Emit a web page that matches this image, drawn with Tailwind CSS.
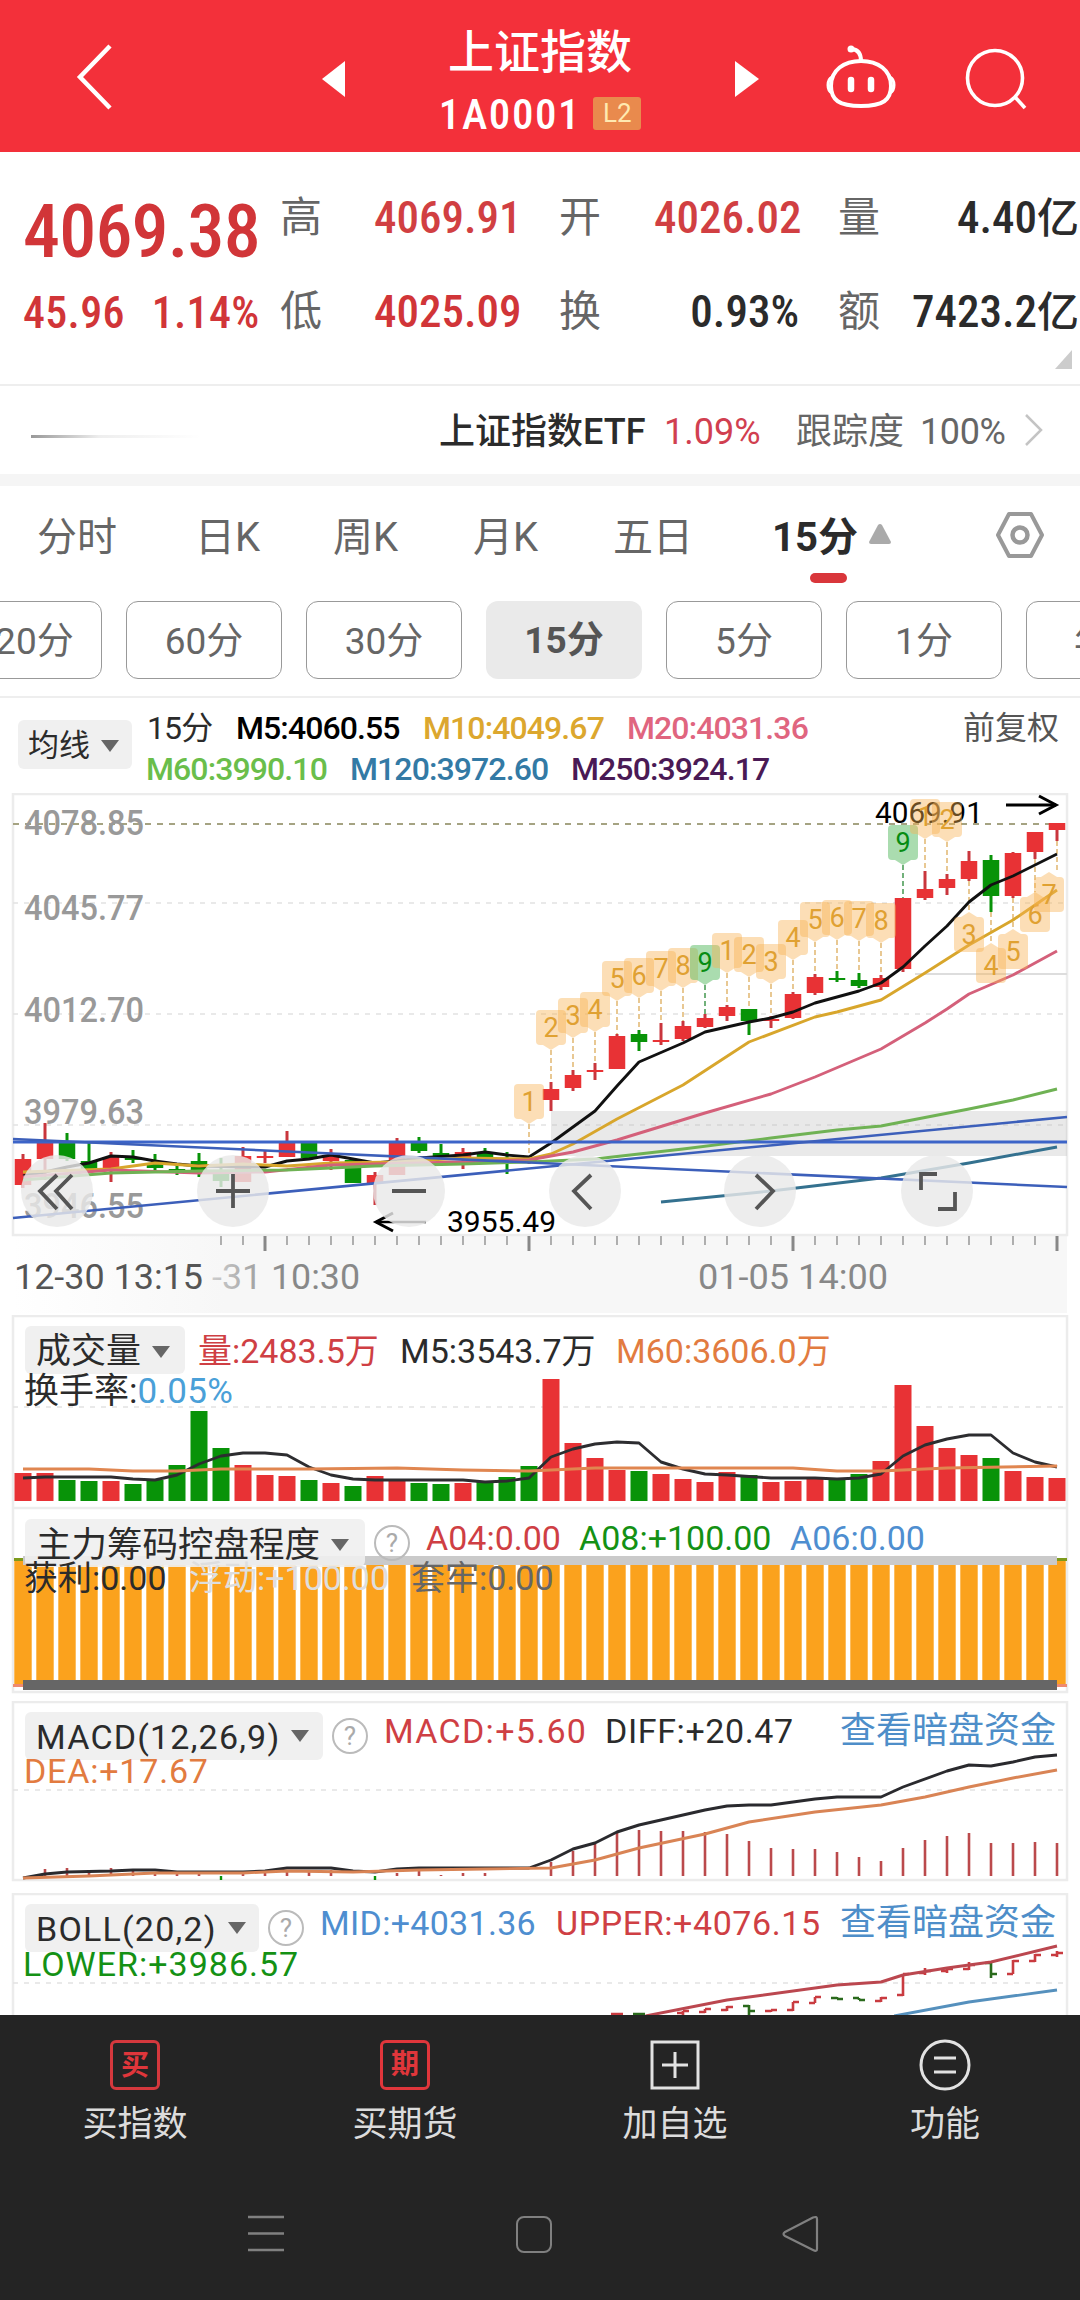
<!DOCTYPE html>
<html lang="zh-CN">
<head>
  <meta charset="UTF-8" />
  <meta name="viewport" content="width=device-width, initial-scale=1.0"/>
  <title>上证指数 1A0001</title>
  <script src="https://cdn.jsdelivr.net/npm/@tailwindcss/browser@4"></script>
</head>
<body class="w-[1080px] h-[2300px] overflow-hidden bg-white font-['Roboto','Noto_Sans_CJK_SC',sans-serif] text-[#2b2b2b]">
<div class="flex h-[2300px] flex-col overflow-hidden">

  <!-- Header -->
  <header class="flex h-[152px] shrink-0 items-center bg-[#f3303a] text-white">
    <svg class="ml-[70px] h-[70px] w-[50px]" viewBox="0 0 50 70" fill="none" stroke="#fff" stroke-width="4.5"><path d="M40 5 L10 36 L40 67"/></svg>
    <svg class="ml-[202px] mt-[6px] h-[36px] w-[23px]" viewBox="0 0 23 36" fill="#fff"><path d="M23 0 L0 18 L23 36Z"/></svg>
    <div class="flex w-[390px] flex-col items-center">
      <h1 class="mt-[9px] text-[46px] leading-[56px] font-medium">上证指数</h1>
      <div class="mt-[10px] flex items-center gap-[12px]">
        <span class="text-[43px] leading-[48px] font-medium font-stretch-75% tracking-[1.6px]">1A0001</span>
        <span class="flex h-[33px] w-[48px] items-center justify-center rounded-[3px] bg-[#e98a4d] text-[26px] text-[#ffe9b0]">L2</span>
      </div>
    </div>
    <svg class="mt-[6px] h-[36px] w-[24px]" viewBox="0 0 24 36" fill="#fff"><path d="M0 0 L24 18 L0 36Z"/></svg>
    <svg class="ml-[64px] h-[70px] w-[76px]" viewBox="0 0 76 70" fill="none" stroke="#fff" stroke-width="4">
      <path d="M38 20 C55 20 68 29 68 45 C68 59 60 65 38 65 C16 65 8 59 8 45 C8 29 21 20 38 20Z"/>
      <path d="M9 36 Q5 38 5 44 Q5 50 9 52 M67 36 Q71 38 71 44 Q71 50 67 52" stroke-width="3"/>
      <path d="M38 20 Q38 9 29 8"/><circle cx="28" cy="8" r="3.500" fill="#fff" stroke="none"/>
      <path d="M28 39V48M48 39V48" stroke-width="6.5" stroke-linecap="round"/>
    </svg>
    <svg class="ml-[62px] mt-[3px] h-[66px] w-[66px]" viewBox="0 0 66 66" fill="none" stroke="#fff" stroke-width="3.6"><circle cx="34" cy="33" r="27.5"/><path d="M54 52 L64 63"/></svg>
  </header>

  <!-- Quote -->
  <section class="relative h-[232px] shrink-0 pt-[38px]">
    <div class="flex pl-[23px]">
      <div class="w-[257px] text-[#d13538]">
        <div class="h-[84px] pt-[4px] text-[74px] leading-[76px] font-medium font-stretch-75% tracking-[-.8px]">4069.38</div>
        <div class="flex gap-[27px] pt-[12px] text-[44px] leading-[54px] font-medium font-stretch-75% tracking-[.3px]"><span>45.96</span><span>1.14%</span></div>
      </div>
      <div class="grid w-[800px] grid-cols-[94px_185px_95px_145px_39px_41px_200px] text-[45px] leading-[56px] font-medium font-stretch-75%">
        <span class="h-[94px] text-[42px] font-normal text-[#666]">高</span><span class="text-[#d13f42]">4069.91</span><span class="text-[42px] font-normal text-[#666]">开</span><span class="text-right text-[#d13f42]">4026.02</span><span></span><span class="text-[42px] font-normal text-[#666]">量</span><span class="text-right">4.40<span class="text-[42px]">亿</span></span>
        <span class="text-[42px] font-normal text-[#666]">低</span><span class="text-[#d13538]">4025.09</span><span class="text-[42px] font-normal text-[#666]">换</span><span class="text-right">0.93%</span><span></span><span class="text-[42px] font-normal text-[#666]">额</span><span class="text-right">7423.2<span class="text-[42px]">亿</span></span>
      </div>
    </div>
    <svg class="absolute left-[1055px] top-[198px] h-[19px] w-[17px]" viewBox="0 0 17 19" fill="#ccc"><path d="M17 0V19H0Z"/></svg>
  </section>

  <!-- ETF -->
  <section class="flex h-[102px] shrink-0 items-center border-t-2 border-[#eeeeee] border-b-[12px] border-b-[#f5f5f5] pl-[31px] pt-[3px] text-[36px]">
    <div class="mt-[10px] h-[3px] w-[170px] bg-linear-to-r from-[#999] via-[#eee] via-40% to-white"></div>
    <span class="ml-[238px] w-[225px] font-medium">上证指数ETF</span>
    <span class="w-[132px] text-[#d13f50]">1.09%</span>
    <span class="w-[124px] text-[#666]">跟踪度</span>
    <span class="w-[104px] text-[#666] tracking-[-.4px]">100%</span>
    <svg class="-mt-[3px] h-[34px] w-[20px]" viewBox="0 0 20 34" fill="none" stroke="#c4c4c4" stroke-width="2.5"><path d="M2 2 L17 17 L2 32"/></svg>
  </section>

  <!-- Period tabs -->
  <nav class="relative flex h-[115px] shrink-0 text-[40px] leading-[104px] text-[#666]">
    <span class="ml-[37px] w-[158px]">分时</span>
    <span class="w-[138px]">日K</span>
    <span class="w-[140px]">周K</span>
    <span class="w-[140px]">月K</span>
    <span class="w-[159px]">五日</span>
    <span class="w-[97px] font-bold text-[#2b2b2b]">15分</span>
    <svg class="mt-[38px] h-[20px] w-[22px]" viewBox="0 0 22 20" fill="#aaa"><path d="M9 1 Q11 -1 13 1 L22 18 Q22 20 20 20 H2 Q0 20 0 18Z"/></svg>
    <svg class="ml-[104px] mt-[25px] h-[48px] w-[50px]" viewBox="0 0 50 48" fill="none" stroke="#999" stroke-width="4"><path d="M14 3 H36 L47 24 L36 45 H14 L3 24Z" stroke-linejoin="round"/><circle cx="25" cy="24" r="7.5" stroke-width="4.5"/></svg>
    <div class="absolute left-[810px] top-[87px] h-[10px] w-[37px] rounded-full bg-[#d9363b]"></div>
  </nav>
  <div class="-ml-[54px] flex h-[97px] w-[1260px] shrink-0 gap-6 border-b-2 border-[#eee] text-[37px] leading-[80px] text-[#666] *:h-[78px] *:w-[156px] *:rounded-xl *:border *:border-[#999] *:text-center">
    <span>120分</span><span>60分</span><span>30分</span><span class="border-none! bg-[#eaeaea] font-bold text-[#555]">15分</span><span>5分</span><span>1分</span><span>年K</span>
  </div>

  <!-- MA legend -->
  <section class="flex h-[95px] shrink-0 pl-[18px] pt-[10px] text-[32px] leading-[41px] whitespace-nowrap">
    <div class="mt-[12px] flex h-[49px] w-[114px] items-center gap-[11px] rounded-md bg-[#f0f0f0] pl-[10px] pt-[2px] text-[31px]">均线<svg class="h-[12px] w-[18px]" viewBox="0 0 18 12" fill="#666"><path d="M0 0H18L9 12Z"/></svg></div>
    <div class="ml-[15px] w-[816px] font-medium tracking-[-.9px]">
      <div class="flex gap-[25px]"><span class="w-[64px] font-normal">15分</span><span class="w-[162px] text-black">M5:4060.55</span><span class="w-[179px] text-[#dca72e]">M10:4049.67</span><span class="text-[#e0657f]">M20:4031.36</span></div>
      <div class="-ml-[1px] flex gap-[25px]"><span class="w-[179px] text-[#6abe4b]">M60:3990.10</span><span class="w-[196px] text-[#337aa5]">M120:3972.60</span><span class="text-[#4a1a55]">M250:3924.17</span></div>
    </div>
    <span class="text-[#555]">前复权</span>
  </section>

  <!-- K line -->
  <svg id="kline" class="h-[522px] w-[1080px] shrink-0" viewBox="0 793 1080 522"></svg>

  <!-- Volume -->
  <section class="relative h-[193px] shrink-0">
    <svg id="volume" class="absolute inset-0 h-[193px] w-[1080px]" viewBox="0 1315 1080 193"></svg>
    <div class="relative flex pl-[25px] pt-[11px] text-[34px] leading-[48px]">
      <div class="mr-[13px] flex h-[48px] w-[160px] items-center gap-[11px] rounded-md bg-[#f0f0f0] pl-[11px] pt-[3px] text-[35px]">成交量<svg class="h-[12px] w-[18px]" viewBox="0 0 18 12" fill="#666"><path d="M0 0H18L9 12Z"/></svg></div>
      <span class="w-[202px] pt-[1px] text-[#cf3f44]">量:2483.5万</span><span class="w-[216px] pt-[1px]">M5:3543.7万</span><span class="pt-[1px] text-[#e27b40]">M60:3606.0万</span>
    </div>
    <div class="relative -mt-[8px] pl-[24px] text-[35px] leading-[50px]">换手率:<span class="text-[#4aa0d8] tracking-[.4px]">0.05%</span></div>
  </section>

  <!-- Chip control -->
  <section class="relative h-[193px] shrink-0">
    <svg id="chip" class="absolute inset-0 h-[193px] w-[1080px]" viewBox="0 1508 1080 193"></svg>
    <div class="relative flex pl-[25px] pt-[11px] text-[34px] leading-[38px]">
      <div class="flex h-[48px] w-[340px] items-center gap-[11px] rounded-md bg-[#f0f0f0]/90 pl-[11px] pt-[3px] text-[35.5px]">主力筹码控盘程度<svg class="h-[12px] w-[18px]" viewBox="0 0 18 12" fill="#666"><path d="M0 0H18L9 12Z"/></svg></div>
      <span class="mx-[9px] mt-[6px] mr-[16px] h-[36px] w-[36px] rounded-full border-2 border-[#bbb] text-center text-[26px] leading-[33px] text-[#aaa]">?</span>
      <span class="w-[153px] text-[#cf3f44]">A04:0.00</span><span class="w-[211px] text-[#149114]">A08:+100.00</span><span class="text-[#4e8ed0]">A06:0.00</span>
    </div>
    <div class="relative -mt-[13px] flex pl-[24px] text-[34px] leading-[48px]"><span class="w-[165px]">获利:0.00</span><span class="w-[222px] text-[#dedede]">浮动:+100.00</span><span class="text-[#666]">套牢:0.00</span></div>
  </section>

  <!-- MACD -->
  <section class="relative h-[192px] shrink-0">
    <svg id="macd" class="absolute inset-0 h-[192px] w-[1080px]" viewBox="0 1701 1080 192"></svg>
    <div class="relative flex pl-[25px] pt-[11px] text-[34px] leading-[38px]">
      <div class="flex h-[48px] w-[298px] items-center gap-[10px] rounded-md bg-[#f0f0f0] pl-[11px]"><span class="w-[245px] pt-[2px] tracking-[1.2px]">MACD(12,26,9)</span><svg class="h-[12px] w-[18px]" viewBox="0 0 18 12" fill="#666"><path d="M0 0H18L9 12Z"/></svg></div>
      <span class="mx-[9px] mt-[6px] mr-[16px] h-[36px] w-[36px] rounded-full border-2 border-[#bbb] text-center text-[26px] leading-[33px] text-[#aaa]">?</span>
      <span class="w-[221px] text-[#cf3f44] tracking-[1.3px]">MACD:+5.60</span><span class="w-[235px] tracking-[.6px]">DIFF:+20.47</span><span class="text-[36px] text-[#4e8ec9]">查看暗盘资金</span>
    </div>
    <div class="relative -mt-[13px] pl-[24px] text-[34px] leading-[48px] text-[#e27b40] tracking-[.8px]">DEA:+17.67</div>
  </section>

  <!-- BOLL -->
  <section class="relative h-[122px] shrink-0 overflow-hidden">
    <svg id="boll" class="absolute inset-0 h-[122px] w-[1080px]" viewBox="0 1893 1080 122"></svg>
    <div class="relative flex pl-[25px] pt-[11px] text-[34px] leading-[38px]">
      <div class="flex h-[48px] w-[234px] items-center gap-[10px] rounded-md bg-[#f0f0f0] pl-[11px]"><span class="w-[182px] pt-[2px] tracking-[1.2px]">BOLL(20,2)</span><svg class="h-[12px] w-[18px]" viewBox="0 0 18 12" fill="#666"><path d="M0 0H18L9 12Z"/></svg></div>
      <span class="mx-[9px] mt-[6px] mr-[16px] h-[36px] w-[36px] rounded-full border-2 border-[#bbb] text-center text-[26px] leading-[33px] text-[#aaa]">?</span>
      <span class="w-[236px] text-[#4e8ed0] tracking-[.3px]">MID:+4031.36</span><span class="w-[284px] text-[#cf3f44] tracking-[.6px]">UPPER:+4076.15</span><span class="text-[36px] text-[#4e8ec9]">查看暗盘资金</span>
    </div>
    <div class="relative -mt-[12px] pl-[23px] text-[34px] leading-[48px] text-[#149114] tracking-[1px]">LOWER:+3986.57</div>
  </section>

  <!-- Bottom bar -->
  <footer class="h-[285px] shrink-0 bg-[#242424] text-[#dcdcdc]">
    <div class="grid grid-cols-4 pt-[25px] text-[35px] leading-[50px] *:flex *:flex-col *:items-center">
      <div><span class="mb-[10px] h-[50px] w-[50px] rounded-md border-3 border-[#d5383d] text-center text-[28px] leading-[46px] font-bold text-[#e0363b]">买</span>买指数</div>
      <div><span class="mb-[10px] h-[50px] w-[50px] rounded-md border-3 border-[#e0363b] text-center text-[28px] leading-[44px] font-bold text-[#e0363b]">期</span>买期货</div>
      <div><svg class="mb-[10px] h-[50px] w-[50px]" viewBox="0 0 50 50" fill="none" stroke="#e2e2e2" stroke-width="3"><path d="M2 2H48V48H2ZM25 12V38M12 25H38"/></svg>加自选</div>
      <div><svg class="mb-[10px] h-[52px] w-[52px] -mt-[1px]" viewBox="0 0 52 52" fill="none" stroke="#e2e2e2" stroke-width="3"><circle cx="26" cy="26" r="24"/><path d="M15 19H37M15 33H37"/></svg><span class="-mt-[1px]">功能</span></div>
    </div>
    <div class="mt-[62px] flex h-[44px] items-center pl-[248px]">
      <svg class="h-[40px] w-[36px]" viewBox="0 0 36 40" stroke="#808080" stroke-width="2.5"><path d="M0 3H36M0 19.500H36M0 36H36"/></svg>
      <span class="ml-[232px] h-[37px] w-[36px] rounded-[8px] border-2 border-[#808080]"></span>
      <svg class="ml-[229px] h-[38px] w-[38px]" viewBox="0 0 38 38" fill="none" stroke="#808080" stroke-width="2.200" stroke-linejoin="round"><path d="M4 17 L32 2.500 Q36 1 36 4 V34 Q36 37 32 35 L4 21 Q1 19 4 17Z"/></svg>
    </div>
  </footer>
</div>

<script>
  const RED = '#e83235', GREEN = '#089308';
  const X = i => 23 + i * 22;
  const rect = (x, y, w, h, fill, extra = '') => `<rect x="${x}" y="${y}" width="${w}" height="${h}" fill="${fill}" ${extra}/>`;
  const seg = (x1, y1, x2, y2, c, w = 2, extra = '') => `<path d="M${x1} ${y1}L${x2} ${y2}" stroke="${c}" stroke-width="${w}" fill="none" ${extra}/>`;
  // pts: [index, y] pairs
  const line = (pts, c, w = 2.9) => `<polyline points="${pts.map(p => X(p[0]) + ',' + p[1]).join(' ')}" fill="none" stroke="${c}" stroke-width="${w}" stroke-linejoin="round"/>`;
  const text = (s, x, y, size, c, len, extra = '') => `<text x="${x}" y="${y}" font-size="${size}" fill="${c}" ${len ? `textLength="${len}" lengthAdjust="spacingAndGlyphs"` : ''} ${extra}>${s}</text>`;
  const frame = (y, h) => `<rect x="13" y="${y}" width="1054" height="${h}" fill="none" stroke="#ececec" stroke-width="2.5"/>`;
  const dash = y => seg(13, y, 1067, y, '#e2e2e2', 1.5, 'stroke-dasharray="5 6"');
  const put = (id, s) => { document.getElementById(id).innerHTML = s; };

  // [color, high, bodyTop, bodyBottom, low] in chart pixels
  const candles = [
    ['r',1154,1159,1185,1188],['r',1123,1143,1159,1180],['g',1133,1143,1159,1161],['g',1142,1161,1170,1172],
    ['r',1152,1157,1169,1182],['g',1150,1157,1160,1163],['g',1154,1163,1168,1171],['g',1165,1169,1171,1175],
    ['g',1153,1161,1173,1177],['g',1158,1172,1181,1187],['r',1147,1156,1182,1182],['r',1150,1156,1158,1163],
    ['r',1131,1143,1157,1157],['g',1142,1142,1158,1158],['r',1149,1156,1161,1170],['g',1160,1160,1183,1183],
    ['r',1172,1175,1183,1205],['r',1138,1141,1175,1175],['g',1137,1142,1151,1153],['g',1144,1153,1157,1160],
    ['r',1148,1152,1157,1169],['g',1148,1153,1158,1160],['g',1152,1158,1162,1174],['r',1156,1159,1162,1164],
    ['r',1082,1089,1100,1111],['r',1070,1075,1088,1091],['r',1063,1070,1072,1080],['r',1034,1036,1069,1069],
    ['g',1030,1034,1042,1051],['r',1023,1040,1042,1045],['r',1021,1026,1039,1041],['r',1014,1018,1027,1028],
    ['r',1005,1007,1016,1021],['g',1009,1009,1021,1035],['r',1016,1019,1021,1028],['r',992,994,1018,1019],
    ['r',974,977,993,995],['g',971,978,980,982],['g',973,980,986,988],['r',975,978,987,990],
    ['r',898,898,969,972],['r',871,889,898,900],['r',874,879,888,895],['r',851,861,879,881],
    ['g',855,860,896,912],['r',852,853,896,898],['r',832,832,852,859],['r',823,823,830,841]
  ];

  // [index, digit, centerY, below]
  const marks = [
    [23,1,1101],[24,2,1027],[25,3,1015],[26,4,1009],[27,5,978],[28,6,975],[29,7,968],[30,8,965],[31,9,962],
    [32,1,950],[33,2,954],[34,3,961],[35,4,937],[36,5,919],[37,6,917],[38,7,918],[39,8,920],[40,9,842],
    [41,1,816],[42,2,819],[43,3,934,1],[44,4,965,1],[45,5,951,1],[46,6,914,1],[47,7,894,1]
  ];

  function drawKline() {
    let s = `<defs><linearGradient id="axis" x1="0" x2="1"><stop offset="0" stop-color="#fff"/><stop offset=".2" stop-color="#f7f7f7"/></linearGradient>
      <linearGradient id="fade" x1="0" x2="1"><stop offset="0" stop-color="#ccc"/><stop offset=".5" stop-color="#888"/></linearGradient></defs>`;
    s += rect(13, 1235, 1054, 78, 'url(#axis)') + frame(794, 441);
    [903, 1014, 1125].forEach(y => s += dash(y));
    s += seg(13, 824, 1057, 824, '#a5a382', 1.8, 'stroke-dasharray="6 6"');
    [['4078.85',835],['4045.77',920],['4012.70',1022],['3979.63',1124],['3946.55',1218]].forEach(l => s += text(l[0], 24, l[1], 35, '#999', 120, 'font-weight="500"'));
    s += rect(551, 1111, 516, 45, '#bbb', 'opacity=".33"') + seg(915, 974, 1067, 974, '#ddd', 2);

    candles.forEach(([k, hi, t, b, lo], i) => {
      const c = k === 'r' ? RED : GREEN;
      s += seg(X(i), hi, X(i), lo, k === 'r' ? '#c9363d' : GREEN, 3) + rect(X(i) - 8.25, t, 16.5, b - t, c);
    });

    marks.forEach(([i, n, y, below]) => {
      const x = X(i), g = n === 9;
      const from = below ? candles[i][4] : y + 23, to = below ? y - 22 : candles[i][1];
      s += seg(x, from, x, to, g ? '#4f9e5a' : '#e3bb78', 1.6, 'stroke-dasharray="5 3"');
    });

    s += line([[0,1176],[1,1172],[2,1167],[3,1163],[4,1156],[5,1157],[6,1161],[7,1164],[8,1166],[10,1167],[11,1167],[12,1161],[13,1159],[14,1155],[15,1159],[16,1163],[17,1161],[18,1158],[20,1155],[21,1152],[22,1155],[23,1157],[24,1143],[26,1111],[27,1086],[28,1062],[30,1043],[31,1032],[33,1022],[34,1018],[35,1012],[36,1003],[38,991],[39,983],[40,967],[41,946],[42,926],[43,902],[44,885],[45,876],[47,854]], '#111');
    s += line([[0,1172],[4,1169],[6,1163],[8,1166],[10,1164],[12,1166],[14,1163],[17,1162],[20,1158],[23,1159],[24,1154],[25,1144],[27,1119],[30,1085],[33,1042],[36,1017],[37,1012],[39,1000],[41,973],[43,945],[45,920],[47,890]], '#d8a62c');
    s += line([[0,1177],[4,1170],[8,1173],[11,1172],[14,1165],[18,1163],[23,1160],[25,1152],[27,1140],[31,1113],[34,1094],[36,1077],[39,1049],[41,1023],[42,1009],[43,994],[45,975],[47,951]], '#d4607a');
    s += line([[0,1180],[4,1173],[8,1171],[12,1170],[16,1166],[20,1164],[23,1162],[26,1159],[30,1149],[34,1138],[37,1130],[39,1126],[43,1109],[45,1100],[47,1089]], '#6fb254');
    s += line([[29,1202],[34,1191],[39,1178],[43,1163],[47,1147]], '#34718f');
    s += seg(13, 1142, 1067, 1142, '#3c64c8', 2.8) + seg(13, 1139, 1067, 1187, '#3c5fba', 2.6) + seg(13, 1218, 1067, 1117, '#3c5fba', 2.6);

    s += text('4069.91', 875, 823, 29, '#000', 108) + seg(1006, 805, 1056, 805, '#000', 3) + `<path d="M1039 796L1056 805L1039 814" fill="none" stroke="#000" stroke-width="3"/>`;
    s += text('3955.49', 447, 1232, 29, '#000', 109) + seg(376, 1222, 426, 1222, '#000', 2.4) + `<path d="M393 1213L376 1222L393 1231" fill="none" stroke="#000" stroke-width="3"/>`;

    marks.forEach(([i, n, y, below]) => {
      // the last badge is kept inside the frame
      const x = Math.min(X(i), 1049), g = n === 9, d = below ? -1 : 1;
      s += `<g fill="${g ? '#58bb62' : '#f9b352'}" opacity="${g ? .5 : .42}"><path d="M${x - 11} ${y - 17}h22q4 0 4 4v27q0 4 -4 4h-22q-4 0 -4 -4v-27q0 -4 4 -4Z"/><path d="M${x - 8} ${y + d * (below ? 17 : 18)}h16l-8 ${d * 5}Z"/></g>`;
      s += text(n, x, y + 10, 27, g ? '#078c12' : '#e0a132', 0, 'text-anchor="middle"');
    });

    // floating controls
    const icons = [
      [57, 'M0 -16L-17 0L0 18M15 -16L-1 0L15 18'], [233, 'M-17 0H17M0 -17V17'], [409, 'M-17 0H17'],
      [585, 'M6 -16L-11 0L6 18'], [760, 'M-4 -16L13 0L-4 18'], [937, 'M-16 -1V-17H0M18 1V18H1']
    ];
    icons.forEach(([x, d]) => s += `<circle cx="${x}" cy="1191" r="36" fill="#e9e9e9" opacity=".82"/><path transform="translate(${x} 1191)" d="${d}" fill="none" stroke="#555" stroke-width="3.8"/>`);

    for (let i = 9; i < 48; i++) {
      const big = (i + 1) % 12 === 0;
      s += seg(X(i), 1236, X(i), big ? 1251 : 1245, '#888', big ? 3 : 1.3);
    }
    s += text('12-30 13:15', 14, 1289, 35, '#555', 189) + text('-31 10:30', 212, 1289, 35, 'url(#fade)', 148) + text('01-05 14:00', 698, 1289, 35, '#888', 190);
    put('kline', s);
  }

  function drawVolume() {
    const top = [1473,1473,1480,1481,1481,1484,1480,1465,1411,1448,1465,1475,1476,1480,1483,1486,1476,1479,1483,1484,1483,1482,1477,1466,1379,1443,1458,1470,1471,1474,1479,1482,1472,1475,1482,1481,1478,1480,1474,1461,1385,1426,1448,1455,1458,1471,1477,1478];
    const kind = 'rrggrgggggrrrgrgrrggrgggrrrrgrrrrgrrrggrrrrrgrrr';
    let s = frame(1316, 192) + dash(1407);
    top.forEach((y, i) => s += rect(X(i) - 8.5, y, 17, 1501 - y, kind[i] === 'r' ? RED : GREEN));
    s += line([[0,1478],[1,1477],[4,1477],[5,1479],[6,1480],[7,1475],[8,1464],[9,1456],[10,1453],[11,1453],[12,1455],[13,1467],[14,1475],[15,1479],[16,1480],[20,1480],[21,1482],[22,1481],[23,1478],[24,1457],[25,1449],[26,1444],[27,1442],[28,1443],[29,1462],[30,1469],[31,1474],[32,1475],[34,1478],[36,1478],[37,1479],[38,1478],[39,1474],[40,1456],[41,1445],[42,1439],[43,1435],[44,1435],[45,1453],[46,1462],[47,1467]], '#2d2d30');
    s += line([[0,1469],[3,1469],[5,1471],[7,1471],[9,1469],[13,1469],[17,1468],[20,1470],[23,1471],[26,1468],[35,1468],[37,1471],[39,1471],[42,1468],[47,1466]], '#e08650');
    put('volume', s);
  }

  function drawChip() {
    let s = frame(1508, 184);
    for (let i = 0; i < 48; i++) s += rect(X(i) - 8.7, 1560, 17.4, 124, '#fba21d');
    s += rect(14, 1558, 1053, 3, '#7d9a1c') + rect(13, 1684, 1054, 3, '#ee8a70');
    s += rect(23, 1556, 1034, 9, '#cacaca') + rect(23, 1680, 1034, 10, '#666');
    put('chip', s);
  }

  function drawMacd() {
    const h = [0,1869,1868,1870,1868,1869,1873,1873,1874,0,1874,1873,1870,1871,1870,0,0,1873,1871,1875,1873,1873,0,0,1862,1851,1844,1833,1830,1831,1831,1832,1834,1841,1848,1849,1849,1852,1857,1861,1848,1840,1836,1833,1843,1843,1842,1843];
    let s = frame(1702, 178) + dash(1790);
    h.forEach((y, i) => { if (y) s += seg(X(i), y, X(i), 1876, '#bb4a4c', 2.6); });
    [9, 16].forEach(i => s += seg(X(i), 1876, X(i), 1880, GREEN, 2.4));
    s += line([[0,1878],[1,1874],[2,1872],[4,1871],[5,1870],[6,1870],[7,1872],[10,1872],[11,1871],[12,1868],[14,1868],[15,1871],[16,1872],[17,1869],[18,1868],[23,1868],[24,1860],[25,1849],[26,1843],[27,1832],[28,1825],[29,1820],[31,1810],[32,1806],[33,1805],[34,1805],[36,1799],[37,1797],[39,1797],[40,1787],[42,1771],[43,1765],[44,1766],[45,1762],[46,1757],[47,1755]], '#2a2a2e');
    s += line([[0,1878],[3,1876],[6,1873],[10,1873],[12,1871],[15,1872],[18,1870],[21,1869],[24,1868],[26,1860],[28,1848],[31,1834],[33,1822],[36,1812],[39,1805],[41,1797],[43,1787],[45,1778],[47,1770]], '#d98455');
    put('macd', s);
  }

  function drawBoll() {
    // [index, color, open, high, low, close]
    const bars = [
      [27,'r',2014,2014,2015,2014],[28,'g',2014,2014,2015,2014],[30,'r',2013,2011,2015,2011],[31,'r',2012,2009,2013,2009],[32,'r',2010,2006,2011,2007],
      [33,'g',2006,2005,2015,2011],[34,'r',2011,2010,2012,2010],[35,'r',2010,2002,2011,2002],[36,'r',2003,1997,2003,1997],
      [37,'g',1998,1997,1999,1999],[38,'g',1998,1998,2000,2000],[39,'r',2001,1997,2002,1998],[40,'r',1995,1974,1996,1974],
      [41,'r',1973,1968,1975,1971],[42,'r',1971,1968,1973,1969],[43,'r',1969,1962,1970,1965],[44,'g',1963,1962,1978,1974],
      [45,'r',1974,1960,1974,1961],[46,'r',1961,1954,1962,1955],[47,'r',1955,1951,1957,1953]
    ];
    let s = frame(1894, 130) + dash(1983);
    bars.forEach(([i, k, o, hi, lo, c]) => s += `<path d="M${X(i)} ${hi}V${lo}M${X(i) - 6} ${o}H${X(i)}M${X(i)} ${c}H${X(i) + 6}" fill="none" stroke="${k === 'r' ? '#c93b40' : '#2a6a1c'}" stroke-width="2.6"/>`);
    s += line([[28.3,2016],[32,2000],[37,1985],[39,1982],[40,1975],[42,1968],[44,1962],[47,1946]], '#bb474f');
    s += line([[39.6,2016],[43,2002],[47,1990]], '#5590bd');
    put('boll', s);
  }

  drawKline();
  drawVolume();
  drawChip();
  drawMacd();
  drawBoll();
</script>
</body>
</html>
